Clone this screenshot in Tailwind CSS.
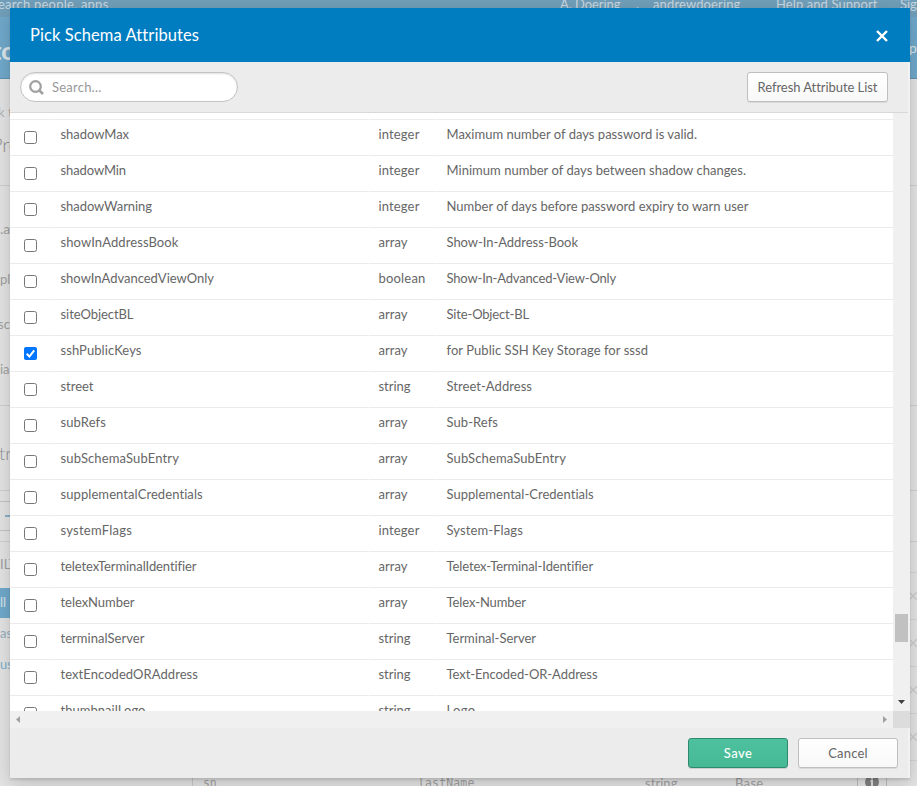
<!DOCTYPE html>
<html lang="en">
<head>
<meta charset="utf-8">
<title>Pick Schema Attributes</title>
<script src="https://cdn.jsdelivr.net/npm/@tailwindcss/browser@4"></script>
</head>
<body class="relative h-[786px] w-[917px] overflow-hidden bg-[#e4e4e4] font-['Lato','Liberation_Sans',sans-serif] text-[13px] text-[#666]">

<!-- Dimmed page behind the dialog -->
<div class="flex h-[786px] flex-col overflow-hidden whitespace-nowrap text-[#a0a0a0]">
  <div class="flex h-[17px] shrink-0 items-start bg-[#719fb9] text-[13px] leading-[16px] text-[#c8d8e1] *:shrink-0">
    <div class="-ml-[2px] -mt-[4px] w-[562px]"><span data-w="110">earch people, apps</span></div>
    <div class="-mt-[4px] w-[76px]"><span data-w="60">A. Doering</span></div>
    <div class="-mt-[4px] w-[17px]">.</div>
    <div class="-mt-[4px] w-[123px]"><span data-w="87">andrewdoering</span></div>
    <div class="-mt-[4px] w-[124px]"><span data-w="101">Help and Support</span></div>
    <div class="-mt-[4px]">Sign out</div>
  </div>
  <div class="flex h-[62px] shrink-0 items-center justify-between border-b border-[#5e93b0] bg-[#70a9cb] text-[#dce5ea]">
    <span class="-ml-[8px] pt-1 text-[25px] font-black leading-[30px]">to</span>
    <span class="-mr-[20px] w-[28px] text-[14px]">pps</span>
  </div>
  <div class="flex flex-1">
    <div class="flex w-[193px] shrink-0 flex-col border-r border-[#c8c8c8]">
      <div class="h-[107px] border-b border-[#cecece]">
        <p class="-ml-[2px] pt-[24px] text-[13px] leading-[18px] text-[#b3b3b3]">k to</p>
        <p class="-ml-[9px] pt-[10px] text-[20px] font-light leading-[26px] text-[#909090]">Profile</p>
      </div>
      <div class="h-[220px] border-b border-[#cecece] leading-[18px]">
        <p class="pt-[34px] text-[14px]">.a</p>
        <p class="pt-[32px]">pl</p>
        <p class="-ml-[2px] pt-[27px]">sc</p>
        <p class="pt-[27px]">ia</p>
      </div>
      <div class="h-[85px] border-b border-[#cecece]"><p class="-ml-px pt-[33px] text-[18px] font-light leading-[28px] text-[#909090]">tr</p></div>
      <div class="h-[40px] pt-[10px]"><div class="h-[30px] border-y border-[#c3c3c3]"><div class="ml-[5px] mt-[13px] h-[2px] w-3 bg-[#88b0c9]"></div></div></div>
      <p class="mt-[10px] border-t border-[#d0d0d0] pt-[13px] leading-[18px]">ILT</p>
      <p class="mt-[15px] h-[30px] bg-[#70a9cb] leading-[29px] text-[#dce5ea]">ll</p>
      <p class="pt-[6px] leading-[18px] text-[#93adbd]">as</p>
      <p class="pt-[13px] leading-[18px] text-[#7fb0cc]">us</p>
    </div>
    <div class="flex flex-1 flex-col">
      <div class="h-[107px] border-b border-[#cecece]"></div>
      <div class="h-[220px] border-b border-[#cecece]"></div>
      <div class="h-[85px] border-b border-[#cecece]"></div>
      <div class="h-[51px] border-b border-[#cecece]"></div>
      <div class="h-[31px] border-b border-[#d4d4d4]"></div>
      <div id="attribute-rows" class="h-[188px]"></div>
      <div class="flex h-[28px] shrink-0 items-end text-[13px] leading-[16px]">
        <div class="h-[14px] w-[216px] pl-[10px] font-['DejaVu_Sans_Mono',monospace] text-[11.5px]"><span data-w="13">sn</span></div>
        <div class="h-[14px] w-[236px] pl-[9px] font-['DejaVu_Sans_Mono',monospace] text-[11.5px]"><span data-w="56">lastName</span></div>
        <div class="h-[14px] w-[90px]"><span data-w="32">string</span></div>
        <div class="h-[14px] w-[122px]"><span data-w="28">Base</span></div>
        <div class="flex h-[14px] w-[30px] justify-center overflow-hidden border-x border-[#bdbdbd]">
          <svg class="size-[14px] shrink-0" viewBox="0 0 14 14"><circle cx="7" cy="7" r="7" fill="#828282"/><path d="M7 2.6v2M5.5 6H7v5.500" stroke="#ddd" stroke-width="2" fill="none"/></svg>
        </div>
      </div>
    </div>
  </div>
</div>

<!-- Dialog -->
<div class="absolute left-[10px] top-2 flex h-[770px] w-[900px] flex-col bg-[#f2f2f2] shadow-[0_2px_2px_rgba(0,0,0,0.1),0_5px_18px_rgba(0,0,0,0.18)]">
  <div class="flex h-[54px] shrink-0 items-center justify-between bg-[#007dc1] pl-[20px] pr-[22px]">
    <h1 class="pb-px text-[16.5px] leading-6 text-white"><span data-w="168">Pick Schema Attributes</span></h1>
    <svg class="mt-[2px] size-3" viewBox="0 0 12 12"><path d="M1 1l10 10M11 1L1 11" stroke="#fff" stroke-width="2.4"/></svg>
  </div>
  <div class="mr-[2px] flex h-[51px] shrink-0 items-start justify-between border-b border-[#d8d8d8] bg-[#ececec] pl-[10px] pr-[20px] pt-[10px]">
    <div class="flex h-[30px] w-[218px] items-center rounded-full border border-[#c3c3c3] bg-white pl-2 shadow-[inset_0_1px_2px_rgba(0,0,0,0.12)]">
      <svg class="size-[15px]" viewBox="0 0 15 15" fill="none" stroke="#a0a0a0"><circle cx="6.500" cy="6.500" r="5.300" stroke-width="2.200"/><path d="M10.300 10.300l3.700 3.700" stroke-width="2.600"/></svg>
      <div class="ml-2 pb-px text-[13px] leading-[18px] text-[#999]"><span data-w="49">Search...</span></div>
    </div>
    <button class="h-[30px] w-[141px] whitespace-nowrap rounded-[3px] border border-[#bfbfbf] bg-gradient-to-b from-white to-[#f8f8f8] text-[13px] leading-[28px] shadow-[0_1px_0_rgba(0,0,0,0.08)]"><span data-w="119">Refresh Attribute List</span></button>
  </div>
  <div class="flex h-[598px] shrink-0">
    <div id="rows" class="h-[598px] w-[883px] overflow-hidden bg-white pt-[6px]"></div>
    <div class="flex w-[17px] flex-col items-center bg-[#f0f0f0]">
      <div class="mt-[501px] h-7 w-[13px] bg-[#c1c1c1]"></div>
      <svg class="mt-[58px] h-1 w-[7px]" viewBox="0 0 7 4"><path d="M0 0h7L3.500 4z" fill="#404040"/></svg>
    </div>
  </div>
  <div class="flex h-[17px] shrink-0 bg-[#f0f0f0]">
    <div class="flex w-[883px] items-center justify-between px-[6px]">
      <svg class="h-[7px] w-1" viewBox="0 0 4 7"><path d="M4 0v7L0 3.500z" fill="#a0a0a0"/></svg>
      <svg class="h-[7px] w-1" viewBox="0 0 4 7"><path d="M0 0v7l4-3.500z" fill="#a0a0a0"/></svg>
    </div>
    <div class="w-[17px] bg-[#dcdcdc]"></div>
  </div>
  <div class="mr-[2px] flex flex-1 justify-end gap-[10px] bg-[#ececec] pr-[10px] pt-[10px]">
    <button class="h-[30px] w-[100px] rounded-[3px] border border-[#2f8a6d] bg-gradient-to-b from-[#4dc19e] to-[#46b894] text-[13px] font-medium leading-[28px] text-white shadow-[0_1px_0_rgba(0,0,0,0.12)]"><span data-w="28">Save</span></button>
    <button class="h-[30px] w-[100px] rounded-[3px] border border-[#bfbfbf] bg-gradient-to-b from-white to-[#f8f8f8] text-[13px] leading-[28px] shadow-[0_1px_0_rgba(0,0,0,0.08)]"><span data-w="39">Cancel</span></button>
  </div>
</div>

<script>
// name, name width, type, description, description width
const rows = [
  ["shadowMax", 68, "integer", "Maximum number of days password is valid.", 250],
  ["shadowMin", 65, "integer", "Minimum number of days between shadow changes.", 299],
  ["shadowWarning", 91, "integer", "Number of days before password expiry to warn user", 301.5],
  ["showInAddressBook", 117.5, "array", "Show-In-Address-Book", 131],
  ["showInAdvancedViewOnly", 153, "boolean", "Show-In-Advanced-View-Only", 169],
  ["siteObjectBL", 72.5, "array", "Site-Object-BL", 82],
  ["sshPublicKeys", 80.5, "array", "for Public SSH Key Storage for sssd", 201],
  ["street", 32.5, "string", "Street-Address", 85],
  ["subRefs", 45, "array", "Sub-Refs", 51],
  ["subSchemaSubEntry", 118, "array", "SubSchemaSubEntry", 119],
  ["supplementalCredentials", 142, "array", "Supplemental-Credentials", 147],
  ["systemFlags", 71, "integer", "System-Flags", 76],
  ["teletexTerminalIdentifier", 135.5, "array", "Teletex-Terminal-Identifier", 146],
  ["telexNumber", 73.5, "array", "Telex-Number", 79],
  ["terminalServer", 83.5, "string", "Terminal-Server", 89],
  ["textEncodedORAddress", 137, "string", "Text-Encoded-OR-Address", 150.5],
  ["thumbnailLogo", 84.5, "string", "Logo", 28.5]
];
const typeWidth = { integer: 40.5, array: 28.5, boolean: 46.5, string: 31.5 };
const off = '<span class="mt-[11px] size-[13px] rounded-[2.5px] border border-[#767676] bg-white"></span>';
const on = '<svg class="mt-[11px] size-[13px]" viewBox="0 0 13 13"><rect width="13" height="13" rx="2" fill="#0075ff"/><path d="M2.700 6.800l2.700 2.700 4.800-6.200" fill="none" stroke="#fff" stroke-width="2"/></svg>';
// The row's own 1px gaps show a paler tint than the cell borders
document.getElementById("rows").innerHTML = rows.map(([name, nw, type, desc, dw]) =>
  `<div class="flex h-9 gap-px whitespace-nowrap bg-[linear-gradient(#f6f6f6_1px,#fff_1px)] leading-[18px]">
    <div class="flex w-10 shrink-0 border-t border-[#ebebeb] pl-[14px]">${name === "sshPublicKeys" ? on : off}</div>
    <div class="w-[317px] shrink-0 border-t border-[#ebebeb] pl-[9.5px] pt-[5px]"><span data-w="${nw}">${name}</span></div>
    <div class="w-[67px] shrink-0 border-t border-[#ebebeb] pl-[9.5px] pt-[5px]"><span data-w="${typeWidth[type]}">${type}</span></div>
    <div class="flex-1 border-t border-[#ebebeb] pl-[9.5px] pt-[5px]"><span data-w="${dw}">${desc}</span></div>
  </div>`).join("");
// Attribute list of the page below, each row ending in a remove icon
document.getElementById("attribute-rows").innerHTML = Array(4).fill(
  `<div class="flex h-[47px] items-center justify-end border-b border-[#d4d4d4]">
    <svg class="size-2" viewBox="0 0 8 8"><path d="M0 0l8 8M8 0L0 8" stroke="#cdcdcd" stroke-width="1.5"/></svg>
  </div>`).join("");
function track() {
  document.querySelectorAll("[data-w]").forEach(el => {
    el.style.letterSpacing = "0px";
    const width = el.getBoundingClientRect().width;
    el.style.letterSpacing = ((+el.dataset.w + 0.5 - width) / el.textContent.length) + "px";
  });
}
window.addEventListener("load", () => { track(); document.fonts.ready.then(track); });
</script>
</body>
</html>
